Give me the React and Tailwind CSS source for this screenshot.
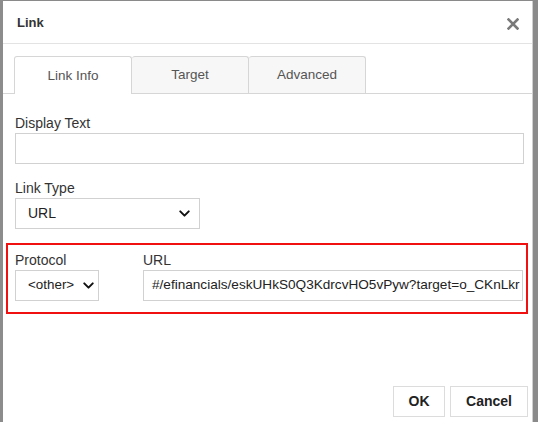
import React from 'react';
import { ChevronDown } from 'lucide-react';

const font = { fontFamily: '"Liberation Sans", Arial, sans-serif' };

const Select = ({ value, className }) => (
  <div className={`flex items-center justify-between h-[31px] border border-[#d1d1d1] bg-white pl-[12px] ${className}`}>
    <span className="text-[#222]">{value}</span>
    <ChevronDown size={17} strokeWidth={2.8} className="text-[#111]" />
  </div>
);

const Label = ({ children }) => (
  <div className="text-[14px] leading-[16px] text-[#333] mb-[2px]">{children}</div>
);

export default function App() {
  return (
    <div className="flex h-[422px] w-[538px] bg-[#8a8a8a] overflow-hidden" style={font}>
      <div className="w-[3px] shrink-0 bg-[#8c8c8c]" />
      <div className="flex-1 min-w-0 flex flex-col bg-white mt-[1px] border-r border-[#cfcfcf]">
        {/* header */}
        <div className="flex items-center justify-between h-[43px] border-b border-[#e3e3e3] pl-[14px] pr-[13px] pt-[2px]">
          <span className="text-[13px] font-bold text-[#333]">Link</span>
          <svg width="12" height="12" viewBox="0 0 12 12" className="mt-[2px]">
            <path d="M1.5 1.5 L10.5 10.5 M10.5 1.5 L1.5 10.5" stroke="#7a7a7a" strokeWidth="2.6" strokeLinecap="square" />
          </svg>
        </div>

        {/* tabs */}
        <div className="flex mt-[12px] h-[38px] border-b border-[#d6d6d6] pl-[11px] text-[13.5px] text-[#555]">
          <div className="w-[118px] -mb-px pt-[1px] flex items-center justify-center bg-white border border-b-0 border-[#d6d6d6] rounded-t-[3px]">
            Link Info
          </div>
          <div className="w-[117px] pt-[1px] flex items-center justify-center bg-[#f7f7f7] border border-b-0 border-l-0 border-[#d6d6d6] rounded-t-[3px]">
            Target
          </div>
          <div className="w-[117px] pt-[1px] flex items-center justify-center bg-[#f7f7f7] border border-b-0 border-l-0 border-[#d6d6d6] rounded-t-[3px]">
            Advanced
          </div>
        </div>

        {/* body */}
        <div className="flex flex-col min-w-0 pl-[12px] pr-[8px] pt-[21px]">
          <Label>Display Text</Label>
          <div className="h-[31px] border border-[#d1d1d1] bg-white" />

          <div className="mt-[16px]">
            <Label>Link Type</Label>
            <Select value="URL" className="w-[185px] pr-[6px] text-[14px]" />
          </div>

          <div className="mt-[14px] -ml-[9px] -mr-[4px] border-2 border-[#f01010] pl-[7px] pr-[3px] pt-[7px] pb-[11px] flex gap-[44px] min-w-0">
            <div className="flex flex-col shrink-0">
              <Label>Protocol</Label>
              <Select value="<other>" className="w-[84px] pr-[1px] text-[13.4px]" />
            </div>
            <div className="flex flex-col flex-1 min-w-0">
              <Label>URL</Label>
              <div className="h-[31px] border border-[#d1d1d1] bg-white flex items-center pl-[8px] pr-[2px] text-[13.6px] text-[#222] overflow-hidden whitespace-nowrap">
                #/efinancials/eskUHkS0Q3KdrcvHO5vPyw?target=o_CKnLkr
              </div>
            </div>
          </div>
        </div>

        {/* footer */}
        <div className="mt-auto flex justify-end gap-[5px] pr-[4px] pb-[5px]">
          <button className="h-[31px] w-[52px] border border-[#dcdcdc] bg-white text-[14px] font-bold text-[#222]">OK</button>
          <button className="h-[31px] w-[78px] border border-[#dcdcdc] bg-white text-[14px] font-bold text-[#222]">Cancel</button>
        </div>
      </div>
      <div className="w-[5px] shrink-0 bg-[#8a8a8a]" />
    </div>
  );
}
